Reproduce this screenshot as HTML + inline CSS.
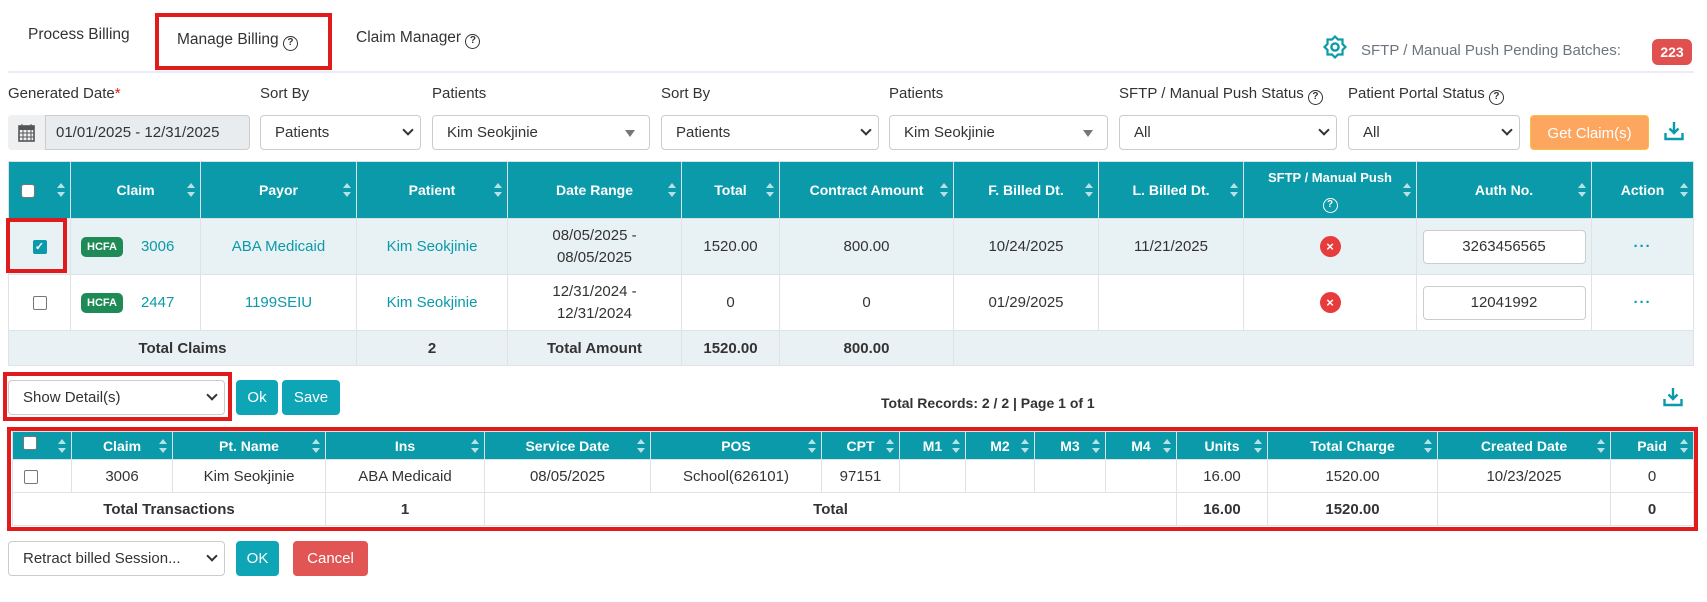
<!DOCTYPE html>
<html><head><meta charset="utf-8"><style>
*{box-sizing:border-box;margin:0;padding:0}
body{width:1707px;height:602px;background:#fff;font-family:"Liberation Sans",sans-serif;color:#333;position:relative;overflow:hidden;font-size:15px}
.a{position:absolute}
.lbl{position:absolute;top:85px;font-size:15px;color:#333}
.sel{position:absolute;top:115px;height:35px;border:1px solid #ccc;border-radius:4px;background:#fff;font-size:15px;padding:8px 14px;color:#333}
.chev{position:absolute;right:8px;top:10px;width:8px;height:8px;border-right:2px solid #333;border-bottom:2px solid #333;transform:rotate(45deg)}
.tri{position:absolute;right:14px;top:14px;width:0;height:0;border-left:5px solid transparent;border-right:5px solid transparent;border-top:7px solid #777}
.q{display:inline-block;width:15px;height:15px;border:1.5px solid #333;border-radius:50%;font-size:10px;line-height:12px;text-align:center;font-weight:bold;vertical-align:-1px}
table{border-collapse:collapse;table-layout:fixed;position:absolute}
th{background:#0a9aa9;color:#fff;font-weight:bold;font-size:14px;border:1px solid #d9e2e6;position:relative;text-align:center}
td{border:1px solid #dde3e6;text-align:center;font-size:15px}
.s{position:absolute;right:5px;top:50%;margin-top:-7px;width:8px;height:14px}
.s:before{content:"";position:absolute;left:0;top:0;border-left:4px solid transparent;border-right:4px solid transparent;border-bottom:5px solid #b9e0e5}
.s:after{content:"";position:absolute;left:0;bottom:0;border-left:4px solid transparent;border-right:4px solid transparent;border-top:5px solid #b9e0e5}
.cb{display:inline-block;width:14px;height:14px;border:1px solid #777;border-radius:2px;background:#fff;vertical-align:middle}
.lnk{color:#0a9aa9}
.hc{display:inline-block;background:#1e8a55;color:#fff;font-size:11px;font-weight:bold;border-radius:5px;padding:4px 6px;vertical-align:middle;margin-right:18px}
.x{display:inline-block;width:21px;height:21px;border-radius:50%;background:#e83b3b;color:#fff;font-size:13px;font-weight:bold;line-height:21px}
.auth{display:inline-block;width:163px;height:34px;border:1px solid #ccc;border-radius:4px;background:#fff;line-height:32px}
.dots{color:#0a9aa9;font-weight:bold;letter-spacing:1px}
.btn{position:absolute;height:35px;border-radius:4px;color:#fff;font-size:15px;text-align:center;line-height:35px}
.t{background:#0ea5b7}
</style></head><body>
<div class="a" style="left:28px;top:26px;font-size:15.5px">Process Billing</div>
<div class="a" style="left:155px;top:13px;width:177px;height:57px;border:4px solid #e01b1b"></div>
<div class="a" style="left:177px;top:31px;font-size:15.5px">Manage Billing <span class="q">?</span></div>
<div class="a" style="left:356px;top:29px;font-size:15.5px">Claim Manager <span class="q">?</span></div>
<div class="a" style="left:8px;top:71px;width:1686px;height:2px;background:#ececf8"></div>
<svg class="a" style="left:1322px;top:34px" width="26" height="26" viewBox="0 0 26 26"><path d="M13 1.5l3 3h4.5v4.5l3 3-3 3v4.5H16l-3 3-3-3H5.5V15l-3-3 3-3V4.5H10z" fill="none" stroke="#0a9aa9" stroke-width="2.2" transform="translate(0,1)"/><circle cx="13" cy="13" r="3.6" fill="none" stroke="#0a9aa9" stroke-width="2.4"/></svg>
<div class="a" style="left:1361px;top:42px;color:#6c757d;font-size:15px">SFTP / Manual Push Pending Batches:</div>
<div class="a" style="left:1652px;top:39px;width:40px;height:26px;background:#e0504f;border-radius:6px;color:#fff;font-weight:bold;font-size:14px;text-align:center;line-height:26px">223</div>

<div class="lbl" style="left:8px">Generated Date<span style="color:#e01b1b">*</span></div>
<div class="lbl" style="left:260px">Sort By</div>
<div class="lbl" style="left:432px">Patients</div>
<div class="lbl" style="left:661px">Sort By</div>
<div class="lbl" style="left:889px">Patients</div>
<div class="lbl" style="left:1119px">SFTP / Manual Push Status <span class="q">?</span></div>
<div class="lbl" style="left:1348px">Patient Portal Status <span class="q">?</span></div>

<div class="a" style="left:8px;top:115px;width:242px;height:35px;border:1px solid #ccc;border-radius:4px;background:#e9ecef"></div>
<div class="a" style="left:8px;top:115px;width:38px;height:35px;border-right:1px solid #ccc;background:#eef0f2;border-radius:4px 0 0 4px"></div>
<svg class="a" style="left:18px;top:123px" width="17" height="19" viewBox="0 0 17 19"><rect x="1" y="3" width="15" height="15" fill="none" stroke="#555" stroke-width="1.6"/><rect x="1" y="3" width="15" height="4" fill="#555"/><path d="M4 1v4M13 1v4M1 10h15M1 14h15M5 7v11M9 7v11M13 7v11" stroke="#555" stroke-width="1"/></svg>
<div class="a" style="left:56px;top:124px;font-size:15px">01/01/2025 - 12/31/2025</div>
<div class="sel" style="left:260px;width:161px">Patients<span class="chev"></span></div>
<div class="sel" style="left:432px;width:218px">Kim Seokjinie<span class="tri"></span></div>
<div class="sel" style="left:661px;width:218px">Patients<span class="chev"></span></div>
<div class="sel" style="left:889px;width:219px">Kim Seokjinie<span class="tri"></span></div>
<div class="sel" style="left:1119px;width:218px">All<span class="chev"></span></div>
<div class="sel" style="left:1348px;width:172px">All<span class="chev"></span></div>
<div class="btn" style="left:1530px;top:115px;width:119px;background:#fca65f;border:1px solid #f9c040">Get Claim(s)</div>
<svg class="a" style="left:1664px;top:121px" width="20" height="20" viewBox="0 0 20 20"><path d="M10 1v11M5.5 7.5L10 12l4.5-4.5" stroke="#0a9aa9" stroke-width="2.4" fill="none"/><path d="M1.5 12v6h17v-6" stroke="#0a9aa9" stroke-width="2.4" fill="none"/></svg>

<table style="left:8px;top:161px;width:1685px">
<colgroup><col style="width:62px"><col style="width:130px"><col style="width:156px"><col style="width:151px"><col style="width:174px"><col style="width:98px"><col style="width:174px"><col style="width:145px"><col style="width:145px"><col style="width:173px"><col style="width:175px"><col style="width:102px"></colgroup>
<tr style="height:57px"><th style="text-align:left;padding-left:12px"><span class="cb" style="border-radius:3px"></span><i class="s"></i></th><th>Claim<i class="s"></i></th><th>Payor<i class="s"></i></th><th>Patient<i class="s"></i></th><th>Date Range<i class="s"></i></th><th>Total<i class="s"></i></th><th>Contract Amount<i class="s"></i></th><th>F. Billed Dt.<i class="s"></i></th><th>L. Billed Dt.<i class="s"></i></th><th style="font-size:13px;line-height:24px">SFTP / Manual Push<br><span class="q" style="border-color:#fff">?</span><i class="s"></i></th><th>Auth No.<i class="s"></i></th><th>Action<i class="s"></i></th></tr>
<tr style="height:56px;background:#e8f1f3"><td><span class="cb" style="background:#0a9aa9;border-color:#0a9aa9;color:#fff;font-size:11px;line-height:12px;font-weight:bold">✓</span></td><td style="text-align:left;padding-left:10px"><span class="hc">HCFA</span><span class="lnk">3006</span></td><td class="lnk">ABA Medicaid</td><td class="lnk">Kim Seokjinie</td><td style="line-height:22px">08/05/2025 -<br>08/05/2025</td><td>1520.00</td><td>800.00</td><td>10/24/2025</td><td>11/21/2025</td><td><span class="x">×</span></td><td><span class="auth">3263456565</span></td><td class="dots">···</td></tr>
<tr style="height:56px"><td><span class="cb"></span></td><td style="text-align:left;padding-left:10px"><span class="hc">HCFA</span><span class="lnk">2447</span></td><td class="lnk">1199SEIU</td><td class="lnk">Kim Seokjinie</td><td style="line-height:22px">12/31/2024 -<br>12/31/2024</td><td>0</td><td>0</td><td>01/29/2025</td><td></td><td><span class="x">×</span></td><td><span class="auth">12041992</span></td><td class="dots">···</td></tr>
<tr style="height:35px;background:#eaf1f4;font-weight:bold"><td colspan="3" style="font-weight:bold">Total Claims</td><td style="font-weight:bold">2</td><td style="font-weight:bold">Total Amount</td><td style="font-weight:bold">1520.00</td><td style="font-weight:bold">800.00</td><td colspan="5"></td></tr>
</table>
<div class="a" style="left:6px;top:218px;width:61px;height:55px;border:4px solid #e01b1b"></div>

<div class="a" style="left:3px;top:372px;width:229px;height:49px;border:4px solid #e01b1b"></div>
<div class="sel" style="left:8px;top:380px;width:217px">Show Detail(s)<span class="chev"></span></div>
<div class="btn t" style="left:236px;top:380px;width:42px">Ok</div>
<div class="btn t" style="left:282px;top:380px;width:58px">Save</div>
<div class="a" style="left:881px;top:395px;font-weight:bold;font-size:14px">Total Records: 2 / 2 | Page 1 of 1</div>
<svg class="a" style="left:1663px;top:387px" width="20" height="20" viewBox="0 0 20 20"><path d="M10 1v11M5.5 7.5L10 12l4.5-4.5" stroke="#0a9aa9" stroke-width="2.4" fill="none"/><path d="M1.5 12v6h17v-6" stroke="#0a9aa9" stroke-width="2.4" fill="none"/></svg>

<table style="left:12px;top:431px;width:1681px">
<colgroup><col style="width:59px"><col style="width:101px"><col style="width:153px"><col style="width:159px"><col style="width:166px"><col style="width:171px"><col style="width:78px"><col style="width:66px"><col style="width:69px"><col style="width:71px"><col style="width:71px"><col style="width:91px"><col style="width:170px"><col style="width:173px"><col style="width:83px"></colgroup>
<tr style="height:28px"><th style="text-align:left;padding-left:10px"><span class="cb" style="vertical-align:2px"></span><i class="s"></i></th><th>Claim<i class="s"></i></th><th>Pt. Name<i class="s"></i></th><th>Ins<i class="s"></i></th><th>Service Date<i class="s"></i></th><th>POS<i class="s"></i></th><th>CPT<i class="s"></i></th><th>M1<i class="s"></i></th><th>M2<i class="s"></i></th><th>M3<i class="s"></i></th><th>M4<i class="s"></i></th><th>Units<i class="s"></i></th><th>Total Charge<i class="s"></i></th><th>Created Date<i class="s"></i></th><th>Paid<i class="s"></i></th></tr>
<tr style="height:33px"><td style="text-align:left;padding-left:11px"><span class="cb"></span></td><td>3006</td><td>Kim Seokjinie</td><td>ABA Medicaid</td><td>08/05/2025</td><td>School(626101)</td><td>97151</td><td></td><td></td><td></td><td></td><td>16.00</td><td>1520.00</td><td>10/23/2025</td><td>0</td></tr>
<tr style="height:33px;font-weight:bold"><td colspan="3" style="font-weight:bold">Total Transactions</td><td style="font-weight:bold">1</td><td colspan="7" style="font-weight:bold">Total</td><td style="font-weight:bold">16.00</td><td style="font-weight:bold">1520.00</td><td></td><td style="font-weight:bold">0</td></tr>
</table>
<div class="a" style="left:7px;top:427px;width:1691px;height:104px;border:4px solid #e01b1b"></div>

<div class="sel" style="left:8px;top:541px;width:217px">Retract billed Session...<span class="chev"></span></div>
<div class="btn t" style="left:236px;top:541px;width:43px">OK</div>
<div class="btn" style="left:293px;top:541px;width:75px;background:#e25555">Cancel</div>
</body></html>
